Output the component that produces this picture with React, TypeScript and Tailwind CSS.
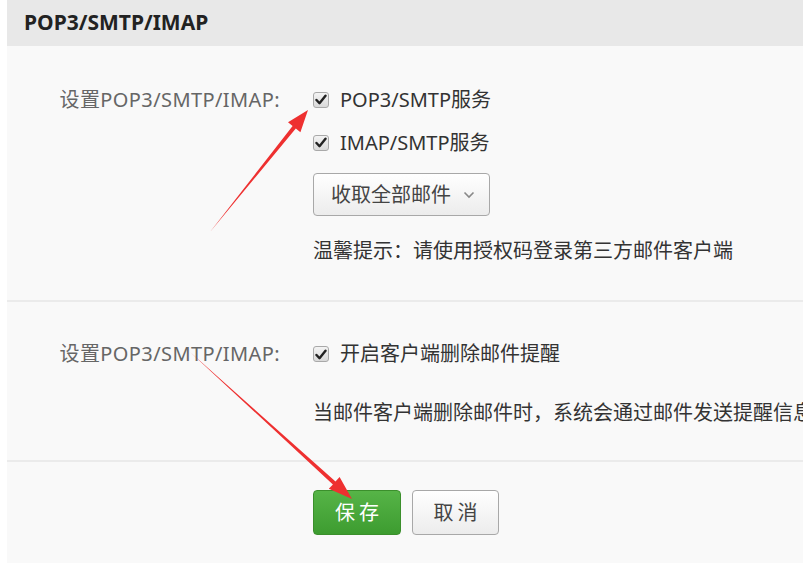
import React from "react";

function Check() {
  return (
    <span className="relative inline-flex h-[16px] w-[16px] shrink-0 items-center justify-center rounded-[3px] border border-[#a9a9a9] bg-gradient-to-b from-[#f4f4f4] to-[#d9d9d9]">
      <svg width="12" height="11" viewBox="0 0 12 11">
        <path d="M1.5 6 L4.5 9.2 L10.5 1.8" fill="none" stroke="#222" strokeWidth="2.4" strokeLinecap="round" strokeLinejoin="round" />
      </svg>
    </span>
  );
}

export default function App() {
  return (
    <div className="relative h-[580px] w-[803px] overflow-hidden bg-white font-['Noto_Sans','Noto_Sans_CJK_SC',sans-serif]">
      <div className="ml-[7px] h-[563px] overflow-hidden bg-[#f9f9f9]">
        <div className="flex h-[46px] items-center bg-[#e8e8e8] pl-[17px] text-[21px] font-bold text-[#222]">
          POP3/SMTP/IMAP
        </div>

        <div className="flex pb-[27px] pt-[32px]">
          <div className="h-[43px] w-[273px] shrink-0 whitespace-nowrap text-right text-[20px] leading-[43px] tracking-[0.4px] text-[#666]">设置POP3/SMTP/IMAP:</div>
          <div className="ml-[33px] flex flex-col text-[20px] text-[#333]">
            <div className="flex h-[43px] items-center">
              <Check />
              <span className="ml-[11px]">POP3/SMTP服务</span>
            </div>
            <div className="flex h-[43px] items-center">
              <Check />
              <span className="ml-[11px]">IMAP/SMTP服务</span>
            </div>
            <div className="mt-[9px] flex h-[43px] w-[177px] items-center rounded-[4px] border border-[#a8a8a8] bg-gradient-to-b from-white to-[#ececec] pl-[17px] text-[#444]">
              <span>收取全部邮件</span>
              <svg className="ml-[12px]" width="12" height="8" viewBox="0 0 12 8">
                <path d="M1.5 1.5 L6 6 L10.5 1.5" fill="none" stroke="#888" strokeWidth="1.6" />
              </svg>
            </div>
            <div className="mt-[13px] h-[44px] whitespace-nowrap leading-[44px] text-[#333]">温馨提示：请使用授权码登录第三方邮件客户端</div>
          </div>
        </div>

        <div className="h-[2px] bg-[#ebebeb]" />

        <div className="flex pb-[25px] pt-[30px]">
          <div className="h-[44px] w-[273px] shrink-0 whitespace-nowrap text-right text-[20px] leading-[44px] tracking-[0.4px] text-[#666]">设置POP3/SMTP/IMAP:</div>
          <div className="ml-[33px] flex shrink-0 flex-col text-[20px] text-[#333]">
            <div className="flex h-[44px] items-center">
              <Check />
              <span className="ml-[11px]">开启客户端删除邮件提醒</span>
            </div>
            <div className="mt-[15px] h-[44px] whitespace-nowrap leading-[44px]">当邮件客户端删除邮件时，系统会通过邮件发送提醒信息</div>
          </div>
        </div>

        <div className="h-[2px] bg-[#ebebeb]" />

        <div className="flex pl-[306px] pt-[28px]">
          <button className="h-[45px] w-[88px] rounded-[4px] border border-[#3b8f2c] bg-gradient-to-b from-[#56b447] to-[#3d9c30] pl-[4px] text-[20px] tracking-[4px] text-white">
            保存
          </button>
          <button className="ml-[11px] h-[45px] w-[87px] rounded-[4px] border border-[#a8a8a8] bg-gradient-to-b from-white to-[#ececec] pl-[4px] text-[20px] tracking-[4px] text-[#444]">
            取消
          </button>
        </div>
      </div>

      <svg className="pointer-events-none absolute left-0 top-0" width="803" height="580" viewBox="0 0 803 580">
        <polygon fill="#ee3030" points="210,232 295.8,128.5 300.4,132.2 308,110 288,122.2 292.6,125.9" />
        <polygon fill="#ee3030" points="190,352 335.5,481.4 339.6,477.0 352,499 328.8,488.8 332.9,484.4" />
      </svg>
    </div>
  );
}
